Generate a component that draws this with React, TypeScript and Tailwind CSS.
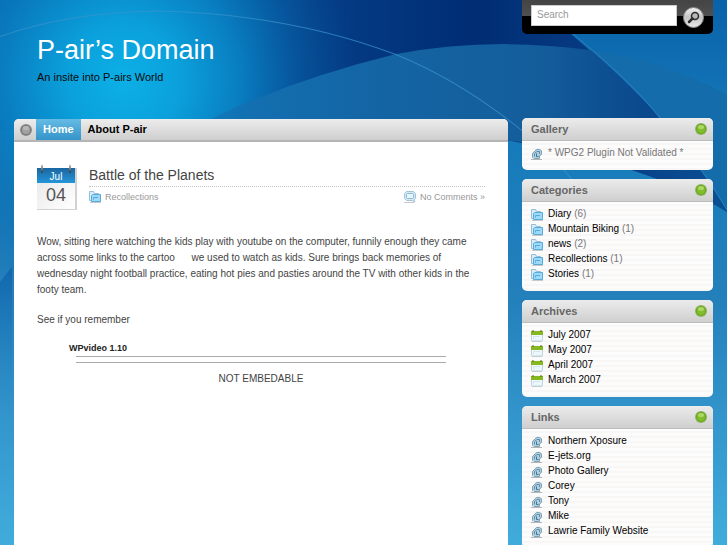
import type { ReactNode } from "react";

const categories = [
  { name: "Diary", count: 6 },
  { name: "Mountain Biking", count: 1 },
  { name: "news", count: 2 },
  { name: "Recollections", count: 1 },
  { name: "Stories", count: 1 },
];

const archives = ["July 2007", "May 2007", "April 2007", "March 2007"];

const links = [
  "Northern Xposure",
  "E-jets.org",
  "Photo Gallery",
  "Corey",
  "Tony",
  "Mike",
  "Lawrie Family Website",
];

function Backdrop() {
  return (
    <svg
      className="absolute inset-0 -z-10 h-full w-full"
      viewBox="0 0 727 545"
      preserveAspectRatio="xMidYMin slice"
      aria-hidden="true"
    >
      <defs>
        <linearGradient id="sky" x1="0" y1="0" x2="0" y2="1">
          <stop offset="0" stopColor="#0a62a8" />
          <stop offset="0.25" stopColor="#167bbb" />
          <stop offset="0.55" stopColor="#2480bb" />
          <stop offset="0.75" stopColor="#3294cb" />
          <stop offset="1" stopColor="#41addc" />
        </linearGradient>
        <linearGradient id="navy" gradientUnits="userSpaceOnUse" x1="0" y1="0" x2="727" y2="0">
          <stop offset="0" stopColor="#0b6bb0" />
          <stop offset="0.25" stopColor="#0760a7" />
          <stop offset="0.42" stopColor="#053f88" />
          <stop offset="0.65" stopColor="#002d74" />
          <stop offset="0.8" stopColor="#063a80" />
          <stop offset="1" stopColor="#0b5094" />
        </linearGradient>
        <linearGradient id="arch" gradientUnits="userSpaceOnUse" x1="150" y1="0" x2="670" y2="0">
          <stop offset="0" stopColor="#1278b8" stopOpacity="0" />
          <stop offset="0.2" stopColor="#136fb0" />
          <stop offset="0.45" stopColor="#1464a3" />
          <stop offset="0.75" stopColor="#145d9b" />
          <stop offset="0.9" stopColor="#0c4d90" />
          <stop offset="1" stopColor="#0a458a" />
        </linearGradient>
        <linearGradient id="leftShade" x1="0" y1="0" x2="0" y2="1">
          <stop offset="0" stopColor="#1166ad" />
          <stop offset="1" stopColor="#2c8fc8" stopOpacity="0" />
        </linearGradient>
        <radialGradient id="glow" gradientUnits="userSpaceOnUse" cx="125" cy="80" r="230">
          <stop offset="0" stopColor="#0cb0e6" />
          <stop offset="0.25" stopColor="#0ba0db" />
          <stop offset="0.5" stopColor="#0983c5" stopOpacity="0.9" />
          <stop offset="0.75" stopColor="#086bb0" stopOpacity="0.45" />
          <stop offset="1" stopColor="#0760a7" stopOpacity="0" />
        </radialGradient>
      </defs>
      <rect width="727" height="545" fill="url(#sky)" />
      <path d="M590 50Q660 60 727 95V215L660 120Z" fill="#146cab" />
      <path d="M0 0H530Q620 75 659 118Q700 165 727 212Q650 165 509 140Q350 112 200 130H0Z" fill="url(#navy)" />
      <rect width="400" height="330" fill="url(#glow)" />
      <path d="M0 283 14 265V420H0Z" fill="url(#leftShade)" />
      <path
        d="M150 150Q260 87 395 54Q490 36 590 50Q640 95 659 118L690 150Q600 152 509 140L400 130Z"
        fill="url(#arch)"
      />
      <path d="M567 30Q625 76 659 118Q700 165 727 212" fill="none" stroke="#257fbe" />
      <path
        d="M0 37Q70 12 160 11Q290 14 395 54Q455 78 515 125Q570 168 600 220"
        fill="none"
        stroke="#3a93cb"
        strokeOpacity="0.75"
      />
    </svg>
  );
}

function FolderIcon() {
  return (
    <svg className="h-3 w-3 shrink-0" viewBox="0 0 12 12" aria-hidden="true">
      <path d="M.5 9.5V.5H4.5L5.5 2.5H9.5V9.5Z" fill="#d9ecf7" stroke="#94bfd6" />
      <path d="M2.5 10.5V4.5L3.5 3.5H11.5V10.5Z" fill="#9bdafb" stroke="#58abd9" />
      <path d="M4.5 8.5V6.5H9" fill="none" stroke="#5aa9d6" />
      <path d="M1 11.5H12" stroke="#c9c9c9" />
    </svg>
  );
}

function ClipIcon() {
  return (
    <svg className="h-3 w-3 shrink-0" viewBox="0 0 12 12" fill="none" aria-hidden="true">
      <path d="M0 11.5H11" stroke="#b5b5b5" />
      <path d="M1 10V5.5L5 1.5Q8 0 11 2.5V6.5L8.5 8.5V10.5H2Z" fill="#b4d0df" />
      <path d="M1.5 9.5V5.5L5.5 1.5Q8.5 .5 10.5 3V6L8.5 8V10.5H3" stroke="#7ba3b9" />
      <path d="M3.5 8.5V5.5L6 3.5H8.5V6" stroke="#5f8fab" />
      <path d="M5.5 5.5V8.5H7.5" stroke="#3f7595" />
    </svg>
  );
}

function CalendarIcon() {
  return (
    <svg className="h-3 w-3 shrink-0" viewBox="0 0 12 12" aria-hidden="true">
      <rect x=".5" y="1.5" width="11" height="9.5" rx=".5" fill="#eef7fb" stroke="#bcd5e2" />
      <path d="M0 1H12V5H0Z" fill="#86b822" />
      <path d="M2 0V2M10 0V2" stroke="#4c6c18" />
      <path d="M2.5 9V6.5H9" fill="none" stroke="#d3e6f0" />
      <path d="M1 11.5H11" stroke="#c4ced2" />
    </svg>
  );
}

function CommentIcon() {
  return (
    <svg className="h-3 w-3 shrink-0" viewBox="0 0 12 12" aria-hidden="true">
      <path d="M0 11.5H10" stroke="#c6c6c6" />
      <path
        d="M2.5.5H9.5L11.5 2.5V7.5L10 9 11 11 8 9.5H2.5L.5 7.5V2.5Z"
        fill="#d3eaf6"
        stroke="#a3c4d5"
      />
      <rect x="2.5" y="2.5" width="7" height="5" rx="1" fill="#e8f5fb" stroke="#8dbdd6" />
    </svg>
  );
}

function Orb({ green = false }: { green?: boolean }) {
  return (
    <svg className="h-3 w-3 shrink-0" viewBox="0 0 12 12" aria-hidden="true">
      <circle cx="6" cy="6" r="6" fill={green ? "#8fb562" : "#8c8c8c"} />
      <circle cx="6" cy="6" r="5" fill={green ? "#69a51c" : "#7d7d7d"} />
      <circle cx="6" cy="6" r="4" fill={green ? "#82bd2b" : "#a2a2a2"} />
      <ellipse cx="6" cy="4" rx="3" ry="2" fill={green ? "#acd764" : "#b8b8b8"} />
    </svg>
  );
}

function SearchKnob() {
  return (
    <svg className="h-full w-full" viewBox="0 0 21 21" aria-hidden="true">
      <defs>
        <linearGradient id="knob" x1="0" y1="0" x2="0" y2="1">
          <stop offset="0" stopColor="#f2f2f2" />
          <stop offset="0.5" stopColor="#c4c4c4" />
          <stop offset="1" stopColor="#ececec" />
        </linearGradient>
      </defs>
      <circle cx="10.5" cy="10.5" r="10" fill="url(#knob)" stroke="#888" />
      <circle cx="12" cy="9" r="3.5" fill="#b9b9b9" stroke="#2c2c2c" strokeWidth="1.5" />
      <path d="M9.5 11.5 6 15" stroke="#2c2c2c" strokeWidth="2.5" strokeLinecap="round" />
    </svg>
  );
}

function DateBadge() {
  return (
    <div className="relative h-[42px] w-10 shrink-0 border-r-2 border-b border-[#d2d2d2] bg-linear-to-br from-[#e6e6e6] to-white text-center">
      <p className="h-[15px] bg-linear-to-b from-[#1a66a3] to-[#2496d8] text-[10px] leading-[17px] text-white">Jul</p>
      <p className="text-lg leading-6 text-[#555]">04</p>
      <span className="absolute -top-[3px] left-1 h-2 w-0.5 rounded-b-full bg-linear-to-b from-[#c8c8c8] to-[#333]" />
      <span className="absolute -top-[3px] right-1 h-2 w-0.5 rounded-b-full bg-linear-to-b from-[#c8c8c8] to-[#333]" />
    </div>
  );
}

function Widget({ title, children }: { title: string; children: ReactNode }) {
  return (
    <section className="overflow-hidden rounded-[5px] bg-[repeating-linear-gradient(#f9f6f6_0_2px,#fdfcfc_2px_5px)]">
      <h2 className="flex h-[23px] items-center justify-between border-b border-[#bdbdbd] bg-linear-to-b from-[#ececec] to-[#cfcfcf] pr-1.5 pl-[9px] text-[11px] font-bold text-[#666]">
        {title}
        <Orb green />
      </h2>
      <ul className="px-[9px] pt-1 pb-[10px] text-[10px] leading-[15px] text-[#777]">{children}</ul>
    </section>
  );
}

function Item({ icon, children }: { icon: ReactNode; children: ReactNode }) {
  return (
    <li className="flex h-[15px] items-end gap-[5px] whitespace-nowrap">
      {icon}
      <span>{children}</span>
    </li>
  );
}

export default function App() {
  return (
    <div className="relative isolate flex min-h-screen flex-col font-['Liberation_Sans',Arial,sans-serif]">
      <Backdrop />
      <div className="flex flex-1 gap-3.5 px-3.5">
        <div className="flex min-w-0 flex-1 flex-col">
          <header className="h-[119px] pt-8 pl-[23px]">
            <h1 className="text-[27px] leading-9 text-white">P-air’s Domain</h1>
            <p className="mt-0.5 text-[11px] leading-[14px] text-[#0a0a0a]">An insite into P-airs World</p>
          </header>

          <main className="flex-1 overflow-hidden rounded-t-[5px] bg-white">
            <nav className="flex h-[23px] items-stretch border-b-2 border-[#b5b5b5] bg-linear-to-b from-[#ededed] to-[#cecece] text-[11px] font-bold">
              <span className="flex w-[22px] items-center justify-end pr-1">
                <Orb />
              </span>
              <a href="#" className="flex items-center bg-linear-to-b from-[#65bbe3] to-[#3494ca] px-[7px] text-white">
                Home
              </a>
              <a href="#" className="flex items-center px-[7px] text-black">
                About P-air
              </a>
            </nav>

            <article className="px-[23px] pt-[26px]">
              <div className="flex gap-3">
                <DateBadge />
                <div className="-mt-[3px] min-w-0 flex-1">
                  <h2 className="border-b border-dotted border-[#c4c4c4] text-sm leading-[21px] text-[#444]">
                    Battle of the Planets
                  </h2>
                  <div className="mt-1 flex justify-between text-[9px] leading-3 text-[#999]">
                    <a href="#" className="flex gap-1">
                      <FolderIcon />
                      Recollections
                    </a>
                    <a href="#" className="flex gap-1">
                      <CommentIcon />
                      No Comments »
                    </a>
                  </div>
                </div>
              </div>

              <div className="mt-6 pr-3 text-[10px] leading-4 text-[#444]">
                <p>
                  Wow, sitting here watching the kids play with youtube on the computer, funnily enough they came
                  across some links to the cartoo&nbsp;&nbsp;&nbsp;&nbsp;&nbsp; we used to watch as kids. Sure brings
                  back memories of wednesday night football practice, eating hot pies and pasties around the TV with
                  other kids in the footy team.
                </p>
                <p className="mt-3.5">See if you remember</p>
              </div>

              <div className="mt-3 px-8">
                <p className="text-[9px] leading-4 font-bold text-[#222]">WPvideo 1.10</p>
                <div className="mx-[7px] h-[7px] border-y border-[#aaa]" />
              </div>
              <p className="mt-2 text-center text-[10px] leading-4 text-[#444]">NOT EMBEDABLE</p>
            </article>
          </main>
        </div>

        <aside className="w-[191px] shrink-0">
          <form className="flex h-[34px] items-start justify-between rounded-b-[5px] bg-[linear-gradient(#454545_0_2px,#505050_16px,#000_16px)] px-[9px] pt-[5px]">
            <input
              type="text"
              placeholder="Search"
              aria-label="Search"
              className="h-[21px] w-[146px] border border-[#ccc] bg-white px-[5px] pb-0.5 text-[10px] text-[#444] outline-none placeholder:text-[#999]"
            />
            <button type="submit" aria-label="Submit search" className="mt-0.5 h-[21px] w-[21px]">
              <SearchKnob />
            </button>
          </form>

          <div className="mt-[84px] flex flex-col gap-[9px]">
            <Widget title="Gallery">
              <Item icon={<ClipIcon />}>* WPG2 Plugin Not Validated *</Item>
            </Widget>
            <Widget title="Categories">
              {categories.map((category) => (
                <Item key={category.name} icon={<FolderIcon />}>
                  <a href="#" className="text-black">
                    {category.name}
                  </a>{" "}
                  ({category.count})
                </Item>
              ))}
            </Widget>
            <Widget title="Archives">
              {archives.map((month) => (
                <Item key={month} icon={<CalendarIcon />}>
                  <a href="#" className="text-black">
                    {month}
                  </a>
                </Item>
              ))}
            </Widget>
            <Widget title="Links">
              {links.map((link) => (
                <Item key={link} icon={<ClipIcon />}>
                  <a href="#" className="text-black">
                    {link}
                  </a>
                </Item>
              ))}
            </Widget>
          </div>
        </aside>
      </div>
    </div>
  );
}
